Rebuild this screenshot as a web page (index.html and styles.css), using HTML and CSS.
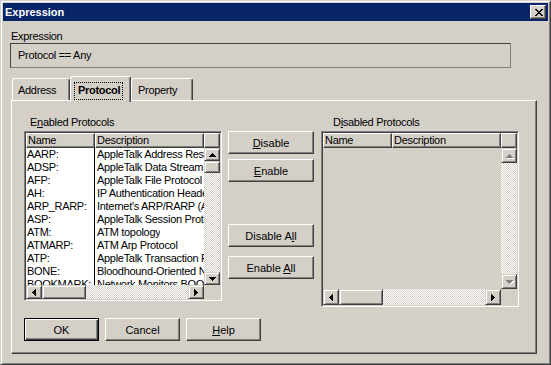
FILE: index.html
```html
<!DOCTYPE html>
<html lang="en">
<head>
    <meta charset="UTF-8">
    <title>Expression</title>
    <link rel="stylesheet" href="styles.css">
</head>
<body>
    <div class="window">
        <div class="titlebar">
            <span class="title">Expression</span>
            <button class="close-btn" type="button">
                <svg width="8" height="7" viewBox="0 0 8 7"><path d="M0 0h2v1H0zM6 0h2v1H6zM1 1h2v1H1zM5 1h2v1H5zM2 2h4v1H2zM3 3h2v1H3zM2 4h4v1H2zM1 5h2v1H1zM5 5h2v1H5zM0 6h2v1H0zM6 6h2v1H6z"/></svg>
            </button>
        </div>

        <div class="dialog-body">
            <div class="field-label">Expression</div>
            <div class="expr-box">Protocol == Any</div>

            <div class="tabs">
                <div class="tab tab-address">Address</div>
                <div class="tab tab-protocol active"><span class="focus">Protocol</span></div>
                <div class="tab tab-property">Property</div>
            </div>

            <div class="tab-panel">
                <div class="lists">
                    <div class="list-group enabled">
                        <div class="group-label">E<u>n</u>abled Protocols</div>
                        <div class="listview">
                            <div class="lv-header">
                                <div class="hcell col-name">Name</div>
                                <div class="hcell col-desc">Description</div>
                                <div class="hcell col-rest"></div>
                            </div>
                            <div class="lv-body">
                                <div class="row"><span class="c-name">AARP:</span><span class="c-desc">AppleTalk Address Resolution Protocol</span></div>
                                <div class="row"><span class="c-name">ADSP:</span><span class="c-desc">AppleTalk Data Stream Protocol</span></div>
                                <div class="row"><span class="c-name">AFP:</span><span class="c-desc">AppleTalk File Protocol</span></div>
                                <div class="row"><span class="c-name">AH:</span><span class="c-desc">IP Authentication Header</span></div>
                                <div class="row"><span class="c-name">ARP_RARP:</span><span class="c-desc">Internet's ARP/RARP (Address Resolution)</span></div>
                                <div class="row"><span class="c-name">ASP:</span><span class="c-desc">AppleTalk Session Protocol</span></div>
                                <div class="row"><span class="c-name">ATM:</span><span class="c-desc">ATM topology</span></div>
                                <div class="row"><span class="c-name">ATMARP:</span><span class="c-desc">ATM Arp Protocol</span></div>
                                <div class="row"><span class="c-name">ATP:</span><span class="c-desc">AppleTalk Transaction Protocol</span></div>
                                <div class="row"><span class="c-name">BONE:</span><span class="c-desc">Bloodhound-Oriented Network Entity</span></div>
                                <div class="row"><span class="c-name">BOOKMARK:</span><span class="c-desc">Network Monitors BOOKMARK Frame</span></div>
                            </div>
                            <div class="vscroll">
                                <div class="sb-btn"><svg width="7" height="4" viewBox="0 0 7 4"><path d="M3 0h1v1h1v1h1v1h1v1H0V3h1V2h1V1h1z"/></svg></div>
                                <div class="sb-thumb v-thumb"></div>
                                <div class="sb-track"></div>
                                <div class="sb-btn"><svg width="7" height="4" viewBox="0 0 7 4"><path d="M0 0h7v1h-1v1h-1v1h-1v1h-1V3H2V2H1V1H0z"/></svg></div>
                            </div>
                            <div class="hscroll">
                                <div class="sb-btn"><svg width="4" height="7" viewBox="0 0 4 7"><path d="M3 0h1v7h-1v-1h-1v-1h-1v-1h-1v-1h1v-1h1v-1h1z"/></svg></div>
                                <div class="sb-thumb h-thumb"></div>
                                <div class="sb-track"></div>
                                <div class="sb-btn"><svg width="4" height="7" viewBox="0 0 4 7"><path d="M0 0h1v1h1v1h1v1h1v1h-1v1h-1v1h-1v1H0z"/></svg></div>
                            </div>
                            <div class="lv-corner"></div>
                        </div>
                    </div>

                    <div class="move-buttons">
                        <button class="btn wide btn-disable" type="button"><u>D</u>isable</button>
                        <button class="btn wide btn-enable" type="button"><u>E</u>nable</button>
                        <button class="btn wide btn-disable-all" type="button">Disable A<u>l</u>l</button>
                        <button class="btn wide btn-enable-all" type="button">Enable <u>A</u>ll</button>
                    </div>

                    <div class="list-group disabled">
                        <div class="group-label">D<u>i</u>sabled Protocols</div>
                        <div class="listview empty">
                            <div class="lv-header">
                                <div class="hcell col-name">Name</div>
                                <div class="hcell col-desc">Description</div>
                                <div class="hcell col-rest"></div>
                            </div>
                            <div class="lv-body"></div>
                            <div class="vscroll">
                                <div class="sb-btn off"><svg width="7" height="4" viewBox="0 0 7 4"><path d="M3 0h1v1h1v1h1v1h1v1H0V3h1V2h1V1h1z"/></svg></div>
                                <div class="sb-track"></div>
                                <div class="sb-btn off"><svg width="7" height="4" viewBox="0 0 7 4"><path d="M0 0h7v1h-1v1h-1v1h-1v1h-1V3H2V2H1V1H0z"/></svg></div>
                            </div>
                            <div class="hscroll">
                                <div class="sb-btn"><svg width="4" height="7" viewBox="0 0 4 7"><path d="M3 0h1v7h-1v-1h-1v-1h-1v-1h-1v-1h1v-1h1v-1h1z"/></svg></div>
                                <div class="sb-thumb h-thumb"></div>
                                <div class="sb-track"></div>
                                <div class="sb-btn"><svg width="4" height="7" viewBox="0 0 4 7"><path d="M0 0h1v1h1v1h1v1h1v1h-1v1h-1v1h-1v1H0z"/></svg></div>
                            </div>
                            <div class="lv-corner"></div>
                        </div>
                    </div>
                </div>

                <div class="footer-buttons">
                    <button class="btn default" type="button">OK</button>
                    <button class="btn" type="button">Cancel</button>
                    <button class="btn" type="button"><u>H</u>elp</button>
                </div>
            </div>
        </div>
    </div>
</body>
</html>
```

FILE: styles.css
```css
* {
    box-sizing: border-box;
}
body {
    margin: 0;
    background-color: #d4d0c8;
    font-family: "Liberation Sans", Arial, sans-serif;
    font-size: 11px;
    letter-spacing: -0.3px;
    color: #000;
}
u {
    text-decoration-thickness: 1px;
    text-underline-offset: 1px;
}

/* window frame */
.window {
    width: 551px;
    height: 365px;
    background-color: #d4d0c8;
    border: 1px solid;
    border-color: #d4d0c8 #404040 #404040 #d4d0c8;
    box-shadow: inset 1px 1px #fff, inset -1px -1px #808080;
    padding: 2px;
}
.titlebar {
    height: 18px;
    background-color: #0a246a;
    display: flex;
    align-items: center;
    justify-content: space-between;
    padding: 0 2px 0 2px;
}
.title {
    color: #fff;
    font-weight: bold;
    letter-spacing: 0;
}
.close-btn {
    width: 16px;
    height: 14px;
    padding: 0 0 0 1px;
    display: flex;
    align-items: center;
    justify-content: center;
    background-color: #d4d0c8;
    border: 1px solid;
    border-color: #fff #404040 #404040 #fff;
    box-shadow: inset -1px -1px #808080;
}
.close-btn svg {
    display: block;
}

.dialog-body {
    padding: 9px 0 0 7px;
}
.field-label {
    line-height: 13px;
    padding-left: 1px;
}
.expr-box {
    width: 501px;
    height: 25px;
    border: 1px solid;
    border-color: #404040 #808080 #808080 #404040;
    padding-left: 7px;
    line-height: 23px;
}

/* tabs */
.tabs {
    display: flex;
    align-items: flex-end;
    height: 24px;
    margin: 8px 0 0 2px;
}
.tab {
    height: 22px;
    border: 1px solid;
    border-bottom: none;
    border-color: #fff #404040 transparent #fff;
    border-radius: 3px 3px 0 0;
    box-shadow: inset -1px 0 #808080;
    padding: 5px 0 0 5px;
    line-height: 13px;
}
.tab-address {
    width: 58px;
}
.tab-protocol {
    width: 61px;
}
.tab-property {
    width: 62px;
    padding-left: 6px;
}
.tab.active {
    height: 26px;
    margin-bottom: -2px;
    padding: 6px 0 0 4px;
    background-color: #d4d0c8;
    font-weight: bold;
    position: relative;
    z-index: 1;
}
.focus {
    display: inline-block;
    outline: 1px dotted #000;
    outline-offset: 0;
    padding: 1px 2px 2px 3px;
}

.tab-panel {
    width: 526px;
    height: 254px;
    margin-left: 1px;
    border: 1px solid;
    border-color: #fff #404040 #404040 #fff;
    box-shadow: inset -1px -1px #808080;
    padding: 15px 0 0 12px;
}
.lists {
    display: flex;
    align-items: flex-start;
}
.list-group {
    width: 198px;
}
.group-label {
    height: 13px;
    line-height: 13px;
    margin-bottom: 2px;
}
.enabled .group-label {
    padding-left: 6px;
}
.disabled {
    margin-left: 7px;
}
.disabled .group-label {
    padding-left: 12px;
}

/* list view */
.listview {
    height: 170px;
    display: grid;
    grid-template-columns: 1fr 16px;
    grid-template-rows: 15px 1fr 14px;
    border: 1px solid;
    border-color: #808080 #fff #fff #808080;
    box-shadow: inset 1px 1px #404040, inset -1px -1px #d4d0c8;
    padding: 1px;
    background-color: #fff;
}
.listview.empty {
    height: 176px;
    grid-template-rows: 15px 1fr 16px;
    background-color: #d4d0c8;
}
.lv-header {
    grid-column: 1 / -1;
    display: flex;
}
.hcell {
    height: 15px;
    background-color: #d4d0c8;
    border: 1px solid;
    border-color: #fff #404040 #404040 #fff;
    box-shadow: inset -1px -1px #808080;
    padding-left: 1px;
    line-height: 12px;
    white-space: nowrap;
}
.col-name {
    width: 69px;
}
.col-desc {
    width: 109px;
}
.col-rest {
    flex: 1;
}
.lv-body {
    overflow: hidden;
}
.row {
    display: flex;
    height: 13px;
    line-height: 13px;
    white-space: nowrap;
}
.c-name {
    width: 69px;
    flex-shrink: 0;
    padding-left: 1px;
    border-right: 1px solid #000;
}
.c-desc {
    padding-left: 2px;
    overflow: hidden;
}

/* scrollbars */
.vscroll {
    display: flex;
    flex-direction: column;
}
.hscroll {
    display: flex;
}
.sb-btn,
.sb-thumb {
    background-color: #d4d0c8;
    border: 1px solid;
    border-color: #d4d0c8 #404040 #404040 #d4d0c8;
    box-shadow: inset 1px 1px #fff, inset -1px -1px #808080;
}
.sb-btn {
    display: flex;
    align-items: center;
    justify-content: center;
    flex-shrink: 0;
}
.vscroll .sb-btn {
    height: 13px;
}
.hscroll .sb-btn {
    width: 16px;
}
.empty .vscroll .sb-btn {
    height: 15px;
}
.sb-btn svg {
    display: block;
}
.sb-btn.off svg {
    fill: #808080;
    filter: drop-shadow(1px 1px 0 #fff);
}
.v-thumb {
    height: 12px;
    flex-shrink: 0;
}
.h-thumb {
    width: 44px;
    flex-shrink: 0;
}
.sb-track {
    flex: 1;
    background: repeating-conic-gradient(#fff 0% 25%, #d4d0c8 0% 50%) 0 0 / 2px 2px;
}
.lv-corner {
    background-color: #d4d0c8;
}

/* buttons */
.btn {
    width: 75px;
    height: 23px;
    padding: 0;
    background-color: #d4d0c8;
    border: 1px solid;
    border-color: #fff #404040 #404040 #fff;
    box-shadow: inset -1px -1px #808080;
    font: inherit;
    color: #000;
}
.btn.default {
    border-color: #000;
    box-shadow: inset 1px 1px #fff, inset -1px -1px #404040, inset -2px -2px #808080;
}
.btn.wide {
    width: 86px;
    display: block;
}
.move-buttons {
    margin-left: 6px;
    padding-top: 15px;
}
.btn-enable {
    margin-top: 5px;
}
.btn-disable-all {
    margin-top: 42px;
}
.btn-enable-all {
    margin-top: 9px;
}
.footer-buttons {
    display: flex;
    gap: 6px;
    margin-top: 11px;
}
```
